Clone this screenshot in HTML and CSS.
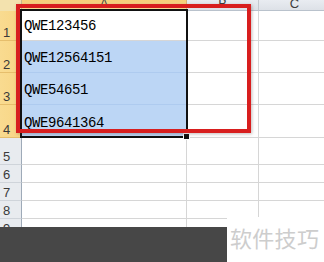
FILE: index.html
```html
<!DOCTYPE html>
<html>
<head>
<meta charset="utf-8">
<link rel="stylesheet" href="styles.css">
</head>
<body>
<div class="sheet">
  <div class="corner"></div>
  <div class="ch ch-sel">A</div>
  <div class="ch">B</div>
  <div class="ch">C</div>

  <div class="rh rh-sel">1</div>
  <div class="cell active">QWE123456</div>
  <div class="cell"></div>
  <div class="cell"></div>

  <div class="rh rh-sel">2</div>
  <div class="cell picked">QWE12564151</div>
  <div class="cell"></div>
  <div class="cell"></div>

  <div class="rh rh-sel">3</div>
  <div class="cell picked">QWE54651</div>
  <div class="cell"></div>
  <div class="cell"></div>

  <div class="rh rh-sel">4</div>
  <div class="cell picked">QWE9641364</div>
  <div class="cell"></div>
  <div class="cell"></div>

  <div class="rh">5</div><div class="cell"></div><div class="cell"></div><div class="cell"></div>
  <div class="rh">6</div><div class="cell"></div><div class="cell"></div><div class="cell"></div>
  <div class="rh">7</div><div class="cell"></div><div class="cell"></div><div class="cell"></div>
  <div class="rh">8</div><div class="cell"></div><div class="cell"></div><div class="cell"></div>
  <div class="rh">9</div><div class="cell"></div><div class="cell"></div><div class="cell"></div>
  <div class="rh">10</div><div class="cell"></div><div class="cell"></div><div class="cell"></div>

  <div class="sel-border"><span class="handle"></span></div>
  <div class="red-box"></div>
</div>
<div class="caption-bar"></div>
<div class="watermark">软件技巧</div>
</body>
</html>
```

FILE: styles.css
```css
html, body {
  margin: 0;
  padding: 0;
  width: 324px;
  height: 262px;
  overflow: hidden;
  background: #fff;
}

.sheet {
  position: relative;
  display: grid;
  grid-template-columns: 22px 165px 72px 72px;
  grid-template-rows: 11px 30px 32px 32px 33px 27px 18px 18px 18px 18px 18px;
  width: 331px;
}

.corner {
  background: #f3e2ae;
  border-right: 1px solid #c9b98e;
  box-sizing: border-box;
}

.ch {
  box-sizing: border-box;
  overflow: hidden;
  display: flex;
  align-items: flex-end;
  justify-content: center;
  background: linear-gradient(#e9ecf1, #dde1e7);
  border-right: 1px solid #c3c8cf;
  border-bottom: 1px solid #b9c2cc;
  font-family: "Liberation Sans", Arial, sans-serif;
  font-size: 13px;
  line-height: 13px;
  color: #3d3d3d;
}

.ch-sel {
  background: linear-gradient(#f7cf78, #f9dc94);
  border-bottom: 1px solid #e2a84a;
  border-right: 1px solid #d9b575;
}

.rh {
  box-sizing: border-box;
  display: flex;
  align-items: flex-end;
  padding: 0 0 1px 3px;
  background: #e8ebef;
  border-right: 1px solid #9eaab8;
  border-bottom: 1px solid #cfd4da;
  font-family: "Liberation Sans", Arial, sans-serif;
  font-size: 13px;
  line-height: 13px;
  color: #3a3a3a;
}

.rh-sel {
  background: linear-gradient(90deg, #f9db90, #f8d585);
  border-right: 1px solid #c9a45a;
  border-bottom: 1px solid #e6be6c;
}

.cell {
  box-sizing: border-box;
  display: flex;
  align-items: flex-end;
  padding: 0 0 6px 2px;
  border-right: 1px solid #d6d6d6;
  border-bottom: 1px solid #d6d6d6;
  font-family: "Liberation Mono", "Courier New", monospace;
  font-size: 14px;
  letter-spacing: -0.4px;
  line-height: 15px;
  color: #000;
  white-space: nowrap;
}

.active {
  background: #fff;
}

.picked {
  background: #bcd6f5;
  border-bottom-color: #aecbef;
  border-right-color: #aecbef;
}

.sel-border {
  position: absolute;
  left: 20px;
  top: 9px;
  width: 168px;
  height: 129px;
  box-sizing: border-box;
  border: 2px solid #111;
}

.handle {
  position: absolute;
  right: -4px;
  bottom: -4px;
  width: 5px;
  height: 5px;
  background: #111;
  border: 1px solid #fff;
}

.red-box {
  position: absolute;
  left: 16px;
  top: 4px;
  width: 235px;
  height: 129px;
  box-sizing: border-box;
  border: 4px solid #d81e1e;
  box-shadow: 1px 1px 3px rgba(90, 60, 60, 0.35);
}

.caption-bar {
  position: absolute;
  left: 0;
  top: 227px;
  width: 227px;
  height: 35px;
  background: #474747;
}

.watermark {
  position: absolute;
  left: 227px;
  top: 217px;
  right: 0;
  bottom: 0;
  background: #fff;
  padding: 7px 0 0 3px;
  box-sizing: border-box;
  font-family: "Noto Sans CJK SC", sans-serif;
  font-size: 22px;
  line-height: 26px;
  letter-spacing: 0.3px;
  color: #cdcdcd;
  white-space: nowrap;
}
```
